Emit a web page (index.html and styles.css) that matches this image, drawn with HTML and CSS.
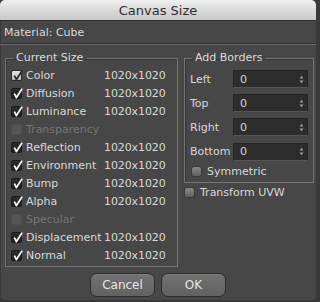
FILE: index.html
```html
<!DOCTYPE html>
<html>
<head>
<meta charset="utf-8">
<link rel="stylesheet" href="styles.css">
</head>
<body>
<div class="window">
  <div class="titlebar">Canvas Size</div>
  <div class="material">Material: Cube</div>
  <div class="sep"></div>
  <div class="main">
    <fieldset class="group current">
      <legend>Current Size</legend>
      <div class="row"><span class="cb mixed"><svg viewBox="0 0 11 11"><path d="M2.6 6.2 L4.4 9.6 L9.8 1.2"/></svg></span><span class="name">Color</span><span class="val">1020x1020</span></div>
      <div class="row"><span class="cb on"><svg viewBox="0 0 11 11"><path d="M2.6 6.2 L4.4 9.6 L9.8 1.2"/></svg></span><span class="name">Diffusion</span><span class="val">1020x1020</span></div>
      <div class="row"><span class="cb on"><svg viewBox="0 0 11 11"><path d="M2.6 6.2 L4.4 9.6 L9.8 1.2"/></svg></span><span class="name">Luminance</span><span class="val">1020x1020</span></div>
      <div class="row disabled"><span class="cb dis"></span><span class="name">Transparency</span></div>
      <div class="row"><span class="cb on"><svg viewBox="0 0 11 11"><path d="M2.6 6.2 L4.4 9.6 L9.8 1.2"/></svg></span><span class="name">Reflection</span><span class="val">1020x1020</span></div>
      <div class="row"><span class="cb on"><svg viewBox="0 0 11 11"><path d="M2.6 6.2 L4.4 9.6 L9.8 1.2"/></svg></span><span class="name">Environment</span><span class="val">1020x1020</span></div>
      <div class="row"><span class="cb on"><svg viewBox="0 0 11 11"><path d="M2.6 6.2 L4.4 9.6 L9.8 1.2"/></svg></span><span class="name">Bump</span><span class="val">1020x1020</span></div>
      <div class="row"><span class="cb on"><svg viewBox="0 0 11 11"><path d="M2.6 6.2 L4.4 9.6 L9.8 1.2"/></svg></span><span class="name">Alpha</span><span class="val">1020x1020</span></div>
      <div class="row disabled"><span class="cb dis"></span><span class="name">Specular</span></div>
      <div class="row"><span class="cb on"><svg viewBox="0 0 11 11"><path d="M2.6 6.2 L4.4 9.6 L9.8 1.2"/></svg></span><span class="name">Displacement</span><span class="val">1020x1020</span></div>
      <div class="row"><span class="cb on"><svg viewBox="0 0 11 11"><path d="M2.6 6.2 L4.4 9.6 L9.8 1.2"/></svg></span><span class="name">Normal</span><span class="val">1020x1020</span></div>
    </fieldset>
    <div class="right">
      <fieldset class="group borders">
        <legend>Add Borders</legend>
        <div class="brow"><span class="blabel">Left</span><div class="input"><span>0</span><svg class="spin" viewBox="0 0 5 9"><path d="M0.5 3.6 L2.5 0.8 L4.5 3.6 Z M0.5 5.4 L2.5 8.2 L4.5 5.4 Z"/></svg></div></div>
        <div class="brow"><span class="blabel">Top</span><div class="input"><span>0</span><svg class="spin" viewBox="0 0 5 9"><path d="M0.5 3.6 L2.5 0.8 L4.5 3.6 Z M0.5 5.4 L2.5 8.2 L4.5 5.4 Z"/></svg></div></div>
        <div class="brow"><span class="blabel">Right</span><div class="input"><span>0</span><svg class="spin" viewBox="0 0 5 9"><path d="M0.5 3.6 L2.5 0.8 L4.5 3.6 Z M0.5 5.4 L2.5 8.2 L4.5 5.4 Z"/></svg></div></div>
        <div class="brow"><span class="blabel">Bottom</span><div class="input"><span>0</span><svg class="spin" viewBox="0 0 5 9"><path d="M0.5 3.6 L2.5 0.8 L4.5 3.6 Z M0.5 5.4 L2.5 8.2 L4.5 5.4 Z"/></svg></div></div>
        <div class="chk sym"><span class="cb off"></span><span>Symmetric</span></div>
      </fieldset>
      <div class="chk uvw"><span class="cb off"></span><span>Transform UVW</span></div>
    </div>
  </div>
  <div class="buttons">
    <button class="btn">Cancel</button>
    <button class="btn">OK</button>
  </div>
</div>
</body>
</html>
```

FILE: styles.css
```css
html, body {
  margin: 0;
  padding: 0;
  background: #393939;
  width: 320px;
  height: 302px;
  overflow: hidden;
}
body {
  font-family: "DejaVu Sans", "Liberation Sans", sans-serif;
  font-size: 11px;
  color: #d9d9d9;
}
.window {
  width: 316px;
  height: 300px;
  background: #474747;
  border-radius: 5px 5px 4px 4px;
  overflow: hidden;
  box-shadow: inset 1px 0 0 #3a3a3a;
}
.titlebar {
  height: 20px;
  line-height: 21px;
  text-align: center;
  font-size: 13px;
  color: #2e2e2e;
  background: linear-gradient(#f0f0f0, #d6d6d6 60%, #c9c9c9);
  border-bottom: 1px solid #2e2e2e;
}
.material {
  padding: 5px 4px 0;
  line-height: 14px;
}
.sep {
  margin-top: 3px;
  height: 1px;
  border-top: 1px solid #303030;
  background: #6c6c6c;
}
.main {
  display: flex;
  align-items: flex-start;
  margin-top: 6px;
  padding-left: 5px;
}
.group {
  margin: 0;
  border: 1px solid #747474;
  box-shadow: inset 1px 1px 0 #353535;
  padding: 1px 5px 2px;
}
.group legend {
  padding: 0 3px;
  margin-left: 2px;
  line-height: 14px;
  color: #dcdcdc;
}
.current {
  width: 161px;
}
.row {
  display: flex;
  align-items: center;
  height: 18px;
}
.name {
  width: 78px;
  margin-left: 4px;
}
.val {
  letter-spacing: -0.1px;
}
.disabled .name {
  color: #767676;
}
.cb {
  flex: none;
  width: 11px;
  height: 11px;
  box-sizing: border-box;
  border-radius: 2px;
  display: inline-block;
  position: relative;
}
.cb svg {
  position: absolute;
  left: 0;
  top: -1px;
  width: 11px;
  height: 11px;
  overflow: visible;
}
.cb svg path {
  fill: none;
  stroke: #f2f2f2;
  stroke-width: 1.8;
  stroke-linecap: round;
  stroke-linejoin: round;
}
.cb.on {
  background: linear-gradient(#2b2b2b, #202020);
  border: 1px solid #1b1b1b;
}
.cb.mixed {
  background: linear-gradient(#e4e4e4, #bdbdbd);
  border: 1px solid #2a2a2a;
}
.cb.mixed svg path {
  stroke: #2a2a2a;
}
.cb.dis {
  background: #555555;
  border: 1px solid #4e4e4e;
}
.cb.off {
  background: linear-gradient(#888, #606060);
  border: 1px solid #3a3a3a;
  border-radius: 3px;
}
.right {
  margin-left: 6px;
  display: flex;
  flex-direction: column;
}
.borders {
  width: 118px;
  padding-top: 2px;
  padding-bottom: 2px;
}
.brow {
  display: flex;
  align-items: center;
  height: 24.2px;
}
.blabel {
  width: 43px;
}
.input {
  width: 75px;
  height: 18px;
  box-sizing: border-box;
  background: #2d2d2d;
  border: 1px solid #262626;
  border-bottom-color: #555;
  display: flex;
  align-items: center;
  justify-content: space-between;
  padding: 0 3px 0 6px;
  color: #d4d4d4;
}
.spin {
  width: 5px;
  height: 9px;
  fill: #9a9a9a;
}
.chk {
  display: flex;
  align-items: center;
  height: 18px;
}
.chk .cb {
  margin-right: 5px;
}
.sym {
  margin-left: 1px;
  height: 16px;
}
.uvw {
  margin-top: 1px;
}
.buttons {
  display: flex;
  justify-content: center;
  gap: 6px;
  margin-top: 6px;
}
.btn {
  width: 65px;
  height: 24px;
  border: 1px solid #2c2c2c;
  border-radius: 7px;
  background: linear-gradient(#727272, #616161);
  box-shadow: inset 0 1px 0 #7e7e7e;
  color: #e6e6e6;
  font-family: "DejaVu Sans", "Liberation Sans", sans-serif;
  font-size: 12px;
  padding: 0;
}
```
